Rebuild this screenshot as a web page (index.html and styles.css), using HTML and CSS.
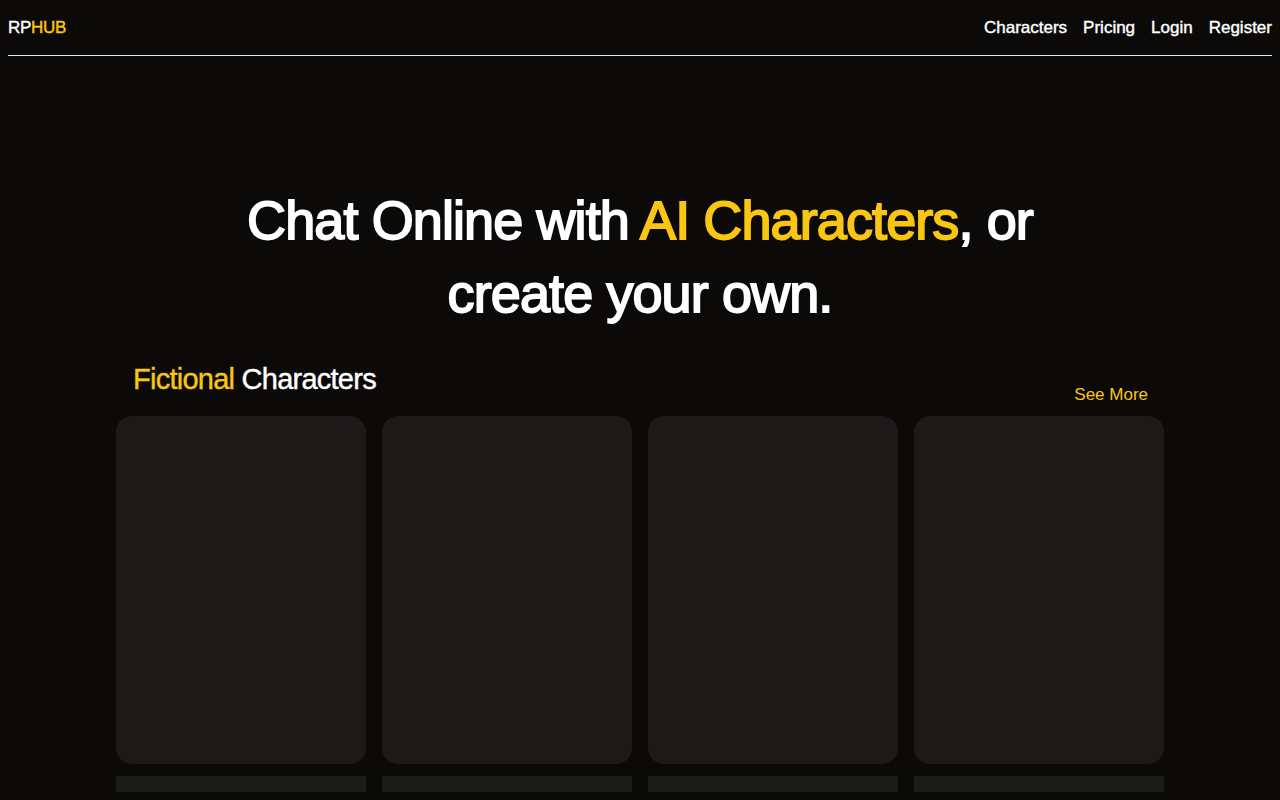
FILE: index.html
```html
<!DOCTYPE html>
<html lang="en">
<head>
    <meta charset="UTF-8">
    <title>RPHUB</title>
    <link rel="stylesheet" href="styles.css">
</head>
<body>
<header class="topbar">
    <a class="logo" href="#">RP<span class="accent">HUB</span></a>
    <nav class="nav">
        <a href="#">Characters</a>
        <a href="#">Pricing</a>
        <a href="#">Login</a>
        <a href="#">Register</a>
    </nav>
</header>

<main class="content">
    <h1 class="hero-title">Chat Online with <span class="accent">AI Characters</span>, or<br>create your own.</h1>

    <section class="section">
        <div class="section-head">
            <h2 class="section-title"><span class="accent">Fictional</span> Characters</h2>
            <a class="see-more" href="#">See More</a>
        </div>
        <div class="cards">
            <div class="card"></div>
            <div class="card"></div>
            <div class="card"></div>
            <div class="card"></div>
        </div>
        <div class="cards under">
            <div class="bar"></div>
            <div class="bar"></div>
            <div class="bar"></div>
            <div class="bar"></div>
        </div>
    </section>
</main>
</body>
</html>
```

FILE: styles.css
```css
body {
    margin: 0;
    background: #0b0a09;
    color: #ffffff;
    font-family: "Liberation Sans", Arial, sans-serif;
    height: 800px;
    overflow: hidden;
}

a {
    color: inherit;
    text-decoration: none;
}

.accent {
    color: #f8c613;
}

.topbar {
    margin: 0 8px;
    height: 55px;
    display: flex;
    align-items: center;
    justify-content: space-between;
    border-bottom: 1px solid #e8e8e8;
}

.logo {
    font-size: 17px;
    letter-spacing: -0.3px;
    -webkit-text-stroke: 0.4px currentColor;
}

.nav {
    display: flex;
    gap: 16px;
}

.nav a {
    font-size: 17px;
    -webkit-text-stroke: 0.4px currentColor;
}

.content {
    width: 1048px;
    margin: 0 auto;
}

.hero-title {
    margin: 128px 0 39px;
    text-align: center;
    font-size: 54px;
    line-height: 73px;
    font-weight: normal;
    letter-spacing: -0.9px;
    -webkit-text-stroke: 1.8px currentColor;
}

.section-head {
    display: flex;
    justify-content: space-between;
    align-items: flex-end;
    padding: 0 16px 0 17px;
    height: 53px;
    margin-top: -6px;
}

.section-title {
    margin: 0;
    align-self: flex-start;
    font-size: 29px;
    font-weight: normal;
    letter-spacing: -0.75px;
    -webkit-text-stroke: 0.4px currentColor;
}

.see-more {
    color: #f8c613;
    font-size: 17px;
    padding-bottom: 11px;
}

.cards {
    display: grid;
    grid-template-columns: repeat(4, 250px);
    gap: 16px;
}

.card {
    height: 348px;
    background: #1c1a19;
    border-radius: 16px;
}

.under {
    margin-top: 12px;
}

.bar {
    height: 16px;
    background: #1b1b1a;
}
```
